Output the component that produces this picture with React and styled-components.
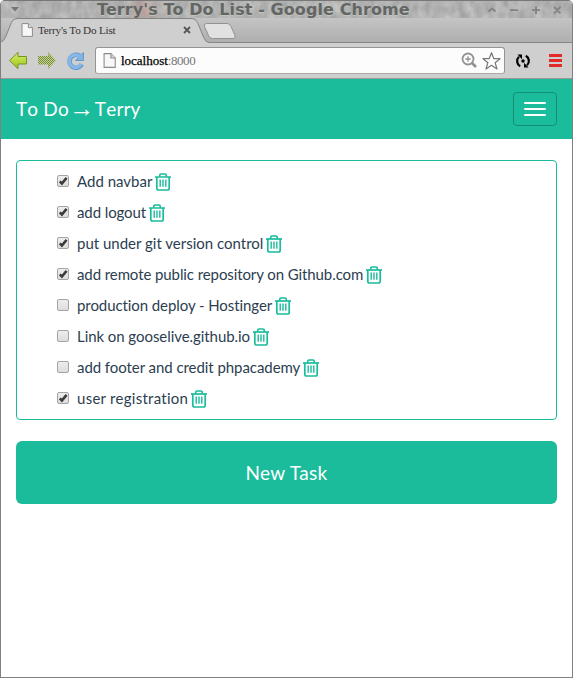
import React from "react";
import styled, { createGlobalStyle } from "styled-components";

const GREEN = "#1abc9c";

const GlobalStyle = createGlobalStyle`
  * { box-sizing: border-box; }
  body { margin: 0; background: #fff; }
  button { font: inherit; margin: 0; padding: 0; border: 0; background: none; }
  svg { display: block; flex: none; }
`;

const Window = styled.div`
  width: 573px;
  height: 678px;
  border: 1px solid #808080;
  border-top: 0;
  border-radius: 5px 5px 0 0;
  overflow: hidden;
  background: #fff;
  display: flex;
  flex-direction: column;
`;

const TitleBar = styled.header`
  position: relative;
  height: 18px;
  flex: none;
  background: #a9aba9;
  border-top: 1px solid #777;
  display: flex;
  align-items: center;
`;

const Texture = styled.svg`
  position: absolute;
  inset: 0;
`;

const MenuArrow = styled.svg`
  position: relative;
  margin-left: 9px;
`;

const WindowTitle = styled.h1`
  position: relative;
  margin: 0 0 0 77px;
  width: 318px;
  font: bold 16px/17px "DejaVu Sans", sans-serif;
  letter-spacing: 0.09px;
  white-space: nowrap;
  color: #646664;
  text-shadow: 0 1px 0 #c1c3c1;
`;

const WindowControls = styled.svg`
  position: relative;
  margin-left: auto;
  margin-right: 9px;
`;

const TabStrip = styled.div`
  height: 25px;
  flex: none;
  display: flex;
  align-items: flex-start;
  background: linear-gradient(#c4c4c4, #b0b0b0 95%);
  border-bottom: 1px solid #858585;
`;

const Tab = styled.div`
  position: relative;
  width: 208px;
  height: 25px;
  flex: none;
  display: flex;
  align-items: center;
  padding: 1px 18px 2px 20px;
`;

const TabShape = styled.svg`
  position: absolute;
  left: 0;
  top: 0;
`;

const TabTitle = styled.span`
  position: relative;
  margin-left: 5px;
  font: 11.2px/14px "Liberation Serif", serif;
  letter-spacing: -0.22px;
  color: #333;
  white-space: nowrap;
`;

const PageIcon = styled.svg`
  position: relative;
`;

const TabClose = styled.svg`
  position: relative;
  margin-left: auto;
`;

const NewTab = styled.svg`
  margin: 4px 0 0 -6px;
`;

const Toolbar = styled.div`
  height: 36px;
  flex: none;
  display: flex;
  align-items: center;
  padding: 0 10px 0 7px;
  background: #cfcfcf;
  border-bottom: 1px solid #999;
`;

const NavIcons = styled.div`
  display: flex;
  gap: 9px;
  width: 87px;
`;

const AddressBar = styled.div`
  width: 410px;
  height: 27px;
  display: flex;
  align-items: center;
  padding: 0 3px 0 7px;
  border: 1px solid #949494;
  border-bottom-color: #aaa;
  border-radius: 3px;
  background: #fcfcfc;
`;

const Address = styled.span`
  margin-left: 5px;
  font: 13px/18px "Liberation Serif", serif;
  letter-spacing: -0.45px;
  color: #777;
  white-space: nowrap;
`;

const Host = styled.span`
  color: #000;
  letter-spacing: 0;
  -webkit-text-stroke: 0.25px #000;
`;

const AddressActions = styled.div`
  display: flex;
  align-items: center;
  gap: 4px;
  margin-left: auto;
`;

const Extensions = styled.div`
  display: flex;
  align-items: center;
  justify-content: space-between;
  width: 47px;
  margin-left: 10px;
  margin-right: -1px;
`;

const Navbar = styled.nav`
  height: 60px;
  flex: none;
  display: flex;
  align-items: center;
  justify-content: space-between;
  padding: 0 15px;
  background: ${GREEN};
`;

const Brand = styled.div`
  display: flex;
  align-items: center;
  padding-bottom: 2px;
  font: 19px/21px Lato, sans-serif;
  font-kerning: none;
  letter-spacing: 0.15px;
  color: #fff;
  white-space: pre;
`;

const BrandArrow = styled.span`
  width: 26px;
  display: flex;
  justify-content: center;
  font: 25px/21px "Liberation Serif", serif;
`;

const Toggle = styled.button`
  width: 44px;
  height: 34px;
  border: 1px solid #128f76;
  border-radius: 4px;
  display: flex;
  flex-direction: column;
  align-items: center;
  justify-content: center;
  gap: 4px;
`;

const ToggleBar = styled.span`
  width: 22px;
  height: 2px;
  border-radius: 1px;
  background: #fff;
`;

const Content = styled.main`
  padding: 21px 15px;
  display: flex;
  flex-direction: column;
  gap: 21px;
`;

const TaskList = styled.ul`
  list-style: none;
  margin: 0;
  padding: 5px 39px;
  border: 1px solid ${GREEN};
  border-radius: 4px;
`;

const TaskRow = styled.li`
  height: 31px;
  display: flex;
  align-items: center;
  font: 15px/21px Lato, sans-serif;
  font-variant-ligatures: none;
  color: #2c3e50;
  white-space: nowrap;
`;

const TaskText = styled.span`
  width: ${(p) => p.$width}px;
  margin: 0 3px 0 7px;
  letter-spacing: ${(p) => p.$tracking}px;
`;

const NewTask = styled.button`
  height: 63px;
  border-radius: 6px;
  background: ${GREEN};
  color: #fff;
  font: 19px/27px Lato, sans-serif;
  letter-spacing: 0.3px;
`;

const tasks = [
  { text: "Add navbar", done: true, width: 75, tracking: 0 },
  { text: "add logout", done: true, width: 69, tracking: -0.1 },
  { text: "put under git version control", done: true, width: 186, tracking: 0 },
  { text: "add remote public repository on Github.com", done: true, width: 286, tracking: -0.09 },
  { text: "production deploy - Hostinger", done: false, width: 195, tracking: -0.08 },
  { text: "Link on gooselive.github.io", done: false, width: 173, tracking: -0.06 },
  { text: "add footer and credit phpacademy", done: false, width: 223, tracking: -0.06 },
  { text: "user registration", done: true, width: 111, tracking: 0.27 },
];

function Page({ size = 14 }) {
  return (
    <PageIcon width={size * 0.86} height={size} viewBox="0 0 12 14">
      <path d="M1 .6h6.4l4 4v8.8H1z" fill="#f7f7f7" stroke="#8b8b8b" strokeWidth="1" />
      <path d="M7.4.6v4h4" fill="#ddd" stroke="#8b8b8b" strokeWidth="1" />
    </PageIcon>
  );
}

function Check({ checked }) {
  return (
    <svg width="14" height="13" viewBox="0 0 14 13">
      <defs>
        <linearGradient id="box" x1="0" y1="0" x2="0" y2="1">
          <stop offset="0" stopColor="#eee" />
          <stop offset="1" stopColor="#dcdcdc" />
        </linearGradient>
      </defs>
      <rect x="1.500" y=".5" width="11" height="11" rx="1.5" fill="url(#box)" stroke="#a5a5a5" />
      {checked && <path d="M3.800 6.300 5.900 8.500 10.600 2.800" fill="none" stroke="#3c3c3c" strokeWidth="2.600" />}
    </svg>
  );
}

function Trash() {
  return (
    <svg width="16" height="18" viewBox="0 0 16 18" fill="none" stroke={GREEN}>
      <path d="M0 4h16" strokeWidth="1.700" />
      <path d="M4.700 3.700V2.500Q4.700 1 6.100 1h3.800q1.400 0 1.400 1.500v1.200" strokeWidth="1.700" />
      <path d="M1.800 4v11.300q0 1.700 1.700 1.700h9q1.700 0 1.700-1.700V4" strokeWidth="1.700" />
      <path d="M5.200 6.500v7.300M8 6.500v7.300M10.800 6.500v7.300" strokeWidth="1.400" />
    </svg>
  );
}

function BrowserNav() {
  return (
    <NavIcons>
      <svg width="20" height="20" viewBox="0 0 20 20">
        <defs>
          <linearGradient id="lime" x1="0" y1="0" x2="0" y2="1">
            <stop offset="0" stopColor="#d5ec6c" />
            <stop offset="1" stopColor="#9bc616" />
          </linearGradient>
        </defs>
        <path d="M1.500 9.500 10 1.300v4.200h8.500V13H10v4.700z" fill="url(#lime)" stroke="#77942b" strokeLinejoin="round" />
      </svg>
      <svg width="20" height="20" viewBox="0 0 20 20">
        <defs>
          <pattern id="dots" width="2" height="2" patternUnits="userSpaceOnUse">
            <rect width="2" height="2" fill="#c7d39c" />
            <path d="M0 0h1v1H0zM1 1h1v1H1z" fill="#758b35" />
          </pattern>
        </defs>
        <path d="M19 9.500 11 1v4H1v8.500h10V18z" fill="url(#dots)" />
      </svg>
      <svg width="20" height="20" viewBox="0 0 20 20">
        <path d="M15.800 13.200A6.500 6.500 0 1 1 13.500 4.800" fill="none" stroke="#6698cd" strokeWidth="4.600" />
        <path d="M17.500 1.500v8H9.500l3-3-1-1.500 3-1z" fill="#82b3e5" stroke="#6698cd" />
        <path d="M15.200 12.800A6.300 6.300 0 1 1 13.800 5.500" fill="none" stroke="#86b7e9" strokeWidth="3.200" />
      </svg>
    </NavIcons>
  );
}

export default function App() {
  return (
    <>
      <GlobalStyle />
      <Window>
        <TitleBar>
          <Texture width="571" height="17">
            <defs>
              <filter id="grain" x="0" y="0" width="100%" height="100%" colorInterpolationFilters="sRGB">
                <feTurbulence type="fractalNoise" baseFrequency=".12 .08" numOctaves="3" seed="8" />
                <feColorMatrix values=".2 0 0 0 .595 .2 0 0 0 .6 .2 0 0 0 .595 0 0 0 0 1" />
              </filter>
              <radialGradient id="blush">
                <stop offset="0" stopColor="#ca7770" stopOpacity=".38" />
                <stop offset="1" stopColor="#c79a91" stopOpacity="0" />
              </radialGradient>
            </defs>
            <rect width="571" height="17" filter="url(#grain)" />
            <ellipse cx="143" cy="9" rx="22" ry="18" fill="url(#blush)" />
          </Texture>
          <MenuArrow width="10" height="5"><path d="M1 0h8L5 4.5z" fill="#737573" /></MenuArrow>
          <WindowTitle>Terry's To Do List - Google Chrome</WindowTitle>
          <WindowControls width="76" height="10" viewBox="0 0 76 10" fill="none" stroke="#818381" strokeWidth="1.8">
            <path d="m1.500 6.500 3.500-3 3.500 3M23 5.200h8M45 5.200h8M49 1.200v8M67 1.800l6.500 6.500M73.500 1.800 67 8.300" />
          </WindowControls>
        </TitleBar>
        <TabStrip>
          <Tab>
            <TabShape width="208" height="25">
              <path d="M0 25v-1q3-1 4.500-5L10.500 4.500Q12 .5 16 .5H191q4 0 5.500 4L203 20q1.500 4 5 4.500V25z" fill="#cfcfcf" />
              <path d="M0 24q3-1 4.500-5L10.500 4.500Q12 .5 16 .5H191q4 0 5.500 4L203 20q1.500 4 5 4.500" fill="none" stroke="#858585" />
            </TabShape>
            <Page size={14} />
            <TabTitle>Terry's To Do List</TabTitle>
            <TabClose width="8" height="8"><path d="m1 1 6 6M7 1 1 7" stroke="#555" strokeWidth="1.8" /></TabClose>
          </Tab>
          <NewTab width="34" height="18">
            <path d="M3.500 1.500H24q3 0 4 3l4 9q1 3-2 3H9.500q-3 0-4-3l-4-9q-1-3 2-3z" fill="#e1e1e1" stroke="#929292" />
          </NewTab>
        </TabStrip>
        <Toolbar>
          <BrowserNav />
          <AddressBar>
            <Page size={15} />
            <Address><Host>localhost</Host>:8000</Address>
            <AddressActions>
              <svg width="17" height="17" viewBox="0 0 17 17" fill="none" stroke="#929292">
                <circle cx="8" cy="7" r="5.500" strokeWidth="1.800" />
                <path d="m12 11 4 4" strokeWidth="2.600" />
                <path d="M5.300 7h5.400M8 4.300v5.400" strokeWidth="1.300" />
              </svg>
              <svg width="20" height="20" viewBox="0 0 20 20">
                <path d="m10.500 1.700 2.300 6h6.200l-4.900 4 1.900 6.300-5.500-3.700L5 18l1.900-6.300-4.900-4h6.200z" fill="#fff" stroke="#777" strokeWidth="1.200" strokeLinejoin="round" />
              </svg>
            </AddressActions>
          </AddressBar>
          <Extensions>
            <svg width="16" height="16" viewBox="0 0 16 16" fill="none" stroke="#000" strokeWidth="2.200">
              <path d="M5.200 13.200A5.900 5.900 0 0 1 4 3.700M10.800 2.800A5.900 5.900 0 0 1 12 12.300" />
              <path d="M2.500 1.500H7v4.800zM13.500 14.500H9V9.700z" fill="#000" stroke="none" />
              <circle cx="8" cy="8" r="1.700" fill="#000" stroke="none" />
            </svg>
            <svg width="13" height="13"><path d="M0 1.500h13M0 6.500h13M0 11.500h13" stroke="#e22c28" strokeWidth="3" /></svg>
          </Extensions>
        </Toolbar>
        <Navbar>
          <Brand>To Do<BrandArrow>→</BrandArrow>Terry</Brand>
          <Toggle aria-label="Toggle navigation"><ToggleBar /><ToggleBar /><ToggleBar /></Toggle>
        </Navbar>
        <Content>
          <TaskList>
            {tasks.map((task) => (
              <TaskRow key={task.text}>
                <Check checked={task.done} />
                <TaskText $width={task.width} $tracking={task.tracking}>{task.text}</TaskText>
                <Trash />
              </TaskRow>
            ))}
          </TaskList>
          <NewTask>New Task</NewTask>
        </Content>
      </Window>
    </>
  );
}
